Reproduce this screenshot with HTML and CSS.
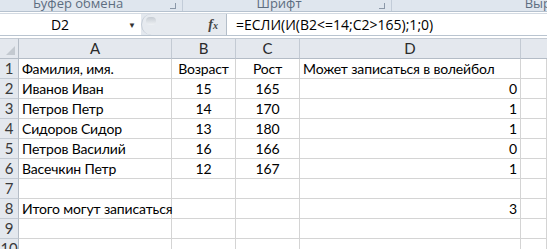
FILE: index.html
```html
<!DOCTYPE html>
<html lang="ru">
<head>
  <meta charset="UTF-8">
  <title>Волейбол</title>
  <link rel="stylesheet" href="styles.css">
</head>
<body>
  <div class="ribbon">
    <div class="group g1"><span class="gname">Буфер обмена</span><span class="launch"></span></div>
    <div class="group g2"><span class="gname">Шрифт</span><span class="launch"></span></div>
    <div class="group g3"><span class="gname">Выр</span></div>
  </div>

  <div class="fbar">
    <div class="namebox">
      <span class="ref">D2</span>
      <span class="drop">&#9660;</span>
    </div>
    <div class="grip">
      <span class="knob"></span>
      <span class="fx">f<small>x</small></span>
    </div>
    <div class="formula">=ЕСЛИ(И(B2&lt;=14;C2&gt;165);1;0)</div>
  </div>

  <div class="sheet">
    <div class="hd corner"><span class="tri"></span></div>
    <div class="hd">A</div>
    <div class="hd">B</div>
    <div class="hd">C</div>
    <div class="hd">D</div>
    <div class="hd last"></div>

    <div class="rn">1</div><div class="c">Фамилия, имя.</div><div class="c mid">Возраст</div><div class="c mid">Рост</div><div class="c">Может записаться в волейбол</div><div class="c"></div>
    <div class="rn">2</div><div class="c">Иванов Иван</div><div class="c mid">15</div><div class="c mid">165</div><div class="c num">0</div><div class="c"></div>
    <div class="rn">3</div><div class="c">Петров Петр</div><div class="c mid">14</div><div class="c mid">170</div><div class="c num">1</div><div class="c"></div>
    <div class="rn">4</div><div class="c">Сидоров Сидор</div><div class="c mid">13</div><div class="c mid">180</div><div class="c num">1</div><div class="c"></div>
    <div class="rn">5</div><div class="c">Петров Василий</div><div class="c mid">16</div><div class="c mid">166</div><div class="c num">0</div><div class="c"></div>
    <div class="rn">6</div><div class="c">Васечкин Петр</div><div class="c mid">12</div><div class="c mid">167</div><div class="c num">1</div><div class="c"></div>
    <div class="rn">7</div><div class="c"></div><div class="c"></div><div class="c"></div><div class="c"></div><div class="c"></div>
    <div class="rn">8</div><div class="c">Итого могут записаться</div><div class="c"></div><div class="c"></div><div class="c num">3</div><div class="c"></div>
    <div class="rn">9</div><div class="c"></div><div class="c"></div><div class="c"></div><div class="c"></div><div class="c"></div>
    <div class="rn">10</div><div class="c"></div><div class="c"></div><div class="c"></div><div class="c"></div><div class="c"></div>
  </div>
</body>
</html>
```

FILE: styles.css
```css
body {
  margin: 0;
  width: 547px;
  height: 249px;
  overflow: hidden;
  background: #ffffff;
  font-family: "Open Sans", "Liberation Sans", sans-serif;
}

/* ribbon group captions, cut at the top */
.ribbon {
  display: flex;
  height: 11px;
  background: #dfe6ee;
  border-bottom: 1px solid #b6c2cf;
  overflow: hidden;
}

.group {
  position: relative;
  display: flex;
  align-items: flex-end;
  justify-content: center;
  border-right: 1px solid #c2ccd8;
  height: 11px;
  box-sizing: border-box;
}

.g1 { width: 183px; padding-right: 26px; }
.g2 { width: 209px; padding-right: 16px; }
.g3 { flex: 1; border-right: none; justify-content: flex-end; }

.gname {
  font-size: 13px;
  line-height: 13px;
  color: #5d6d80;
  margin-bottom: 1px;
}

.g3 .gname { margin-right: -4px; }

.launch {
  position: absolute;
  right: 6px;
  bottom: 2px;
  width: 5px;
  height: 5px;
  border-right: 1px solid #8b98a8;
  border-bottom: 1px solid #8b98a8;
}

/* formula bar */
.fbar {
  display: flex;
  height: 21px;
  margin-top: 1px;
  background: #e3e8ee;
  border-top: 1px solid #d3dae2;
  border-bottom: 1px solid #b9c4d0;
  margin-bottom: 2px;
}

.namebox {
  width: 141px;
  background: #ffffff;
  display: flex;
  align-items: center;
  font-size: 14px;
  color: #000;
}

.ref {
  width: 120px;
  text-align: center;
}

.drop {
  font-size: 8px;
  color: #333;
  margin-left: 8px;
}

.grip {
  position: relative;
  width: 84px;
  border-left: 1px solid #c4ccd6;
  border-radius: 11px 0 0 11px;
  background: #e6eaef;
  display: flex;
  align-items: center;
  justify-content: flex-end;
  border-right: 1px solid #b4bec9;
}

.knob {
  position: absolute;
  left: 4px;
  top: 3px;
  width: 10px;
  height: 8px;
  border-radius: 5px;
  background: linear-gradient(#c6ccd3, #eef1f4);
}

.fx {
  font-family: "Liberation Serif", serif;
  font-style: italic;
  font-weight: bold;
  font-size: 14px;
  color: #444;
  margin-right: 8px;
}

.fx small {
  font-size: 10px;
}

.formula {
  flex: 1;
  background: #ffffff;
  padding-left: 9px;
  font-size: 14px;
  line-height: 21px;
  color: #000;
}

/* worksheet grid */
.sheet {
  display: grid;
  grid-template-columns: 19px 153px 64px 64px 221px 1fr;
  grid-auto-rows: 20px;
  grid-template-rows: 21px;
  font-family: Lato, "Open Sans", sans-serif;
  font-size: 14px;
  letter-spacing: -0.15px;
  color: #000;
}

.hd {
  background: #e4e8ee;
  border-right: 1px solid #c3cad3;
  border-bottom: 1px solid #b4bcc6;
  border-top: 1px solid #c3cad3;
  color: #2a2a2a;
  display: flex;
  align-items: center;
  justify-content: center;
  line-height: 1;
  font-size: 15px;
}

.hd.last { border-right: none; }

.corner {
  position: relative;
  border-right: 1px solid #b4bcc6;
}

.tri {
  position: absolute;
  right: 3px;
  bottom: 3px;
  width: 0;
  height: 0;
  border-left: 9px solid transparent;
  border-bottom: 9px solid #c3c9d0;
}

.rn {
  background: #e4e8ee;
  border-right: 1px solid #b4bcc6;
  border-bottom: 1px solid #c3cad3;
  color: #3a3a3a;
  display: flex;
  align-items: flex-end;
  justify-content: center;
  padding-bottom: 1px;
  line-height: 17px;
  font-size: 15px;
}

.c {
  border-right: 1px solid #d4d4d4;
  border-bottom: 1px solid #d4d4d4;
  padding: 0 3px 1px;
  display: flex;
  align-items: flex-end;
  line-height: 17px;
  white-space: nowrap;
  overflow: visible;
}

.mid { justify-content: center; }
.num { justify-content: flex-end; }
```
